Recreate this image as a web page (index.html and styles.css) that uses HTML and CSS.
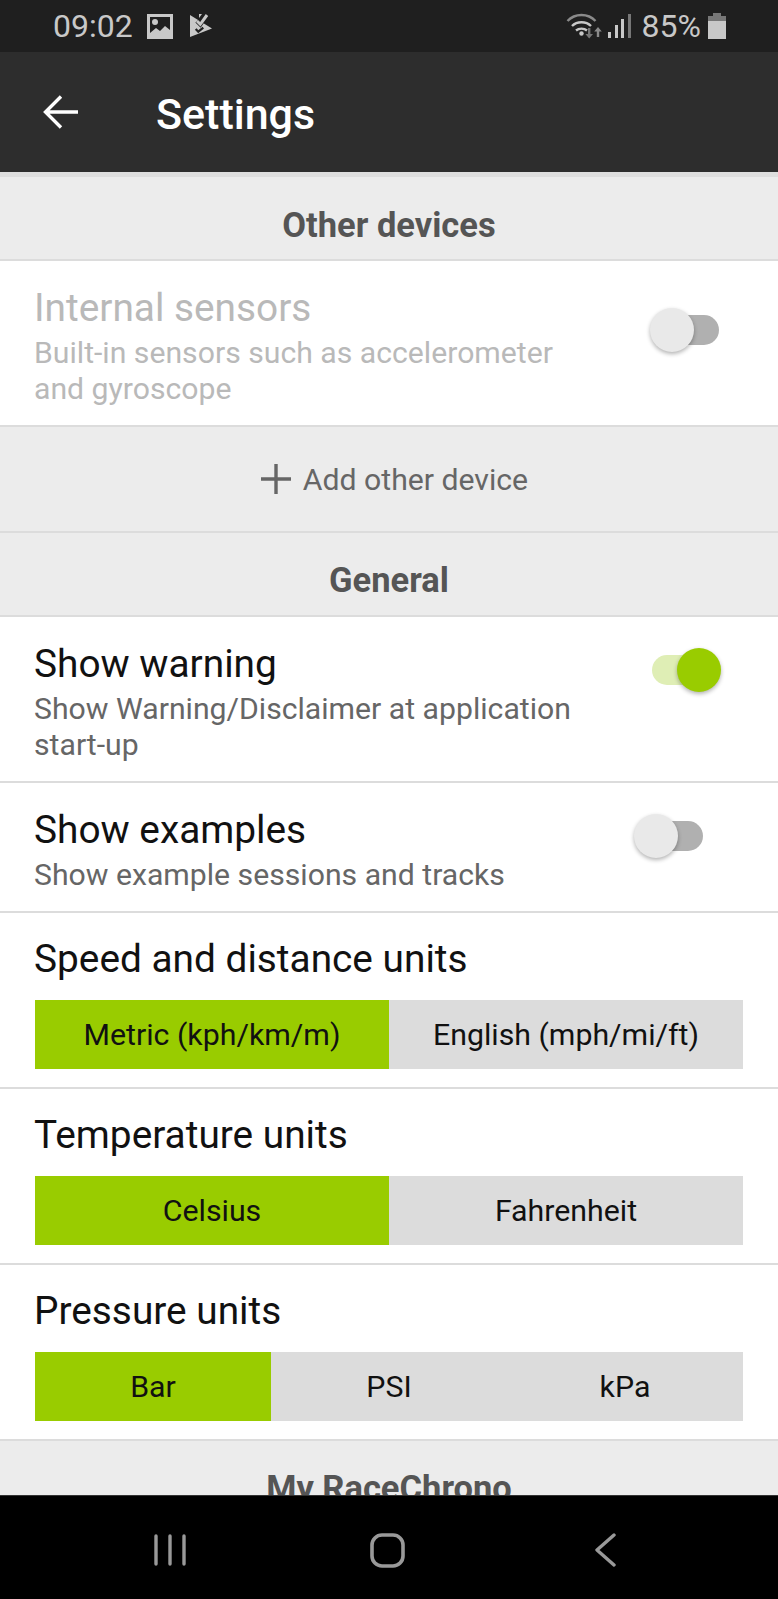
FILE: index.html
```html
<!DOCTYPE html>
<html lang="en">
<head>
    <meta charset="UTF-8">
    <meta name="viewport" content="width=device-width, initial-scale=1.0">
    <title>Settings</title>
    <link rel="stylesheet" href="styles.css">
</head>
<body>
    <div class="phone">
        <div class="status-bar">
            <span class="clock">09:02</span>
            <svg class="status-icon" width="26" height="25" viewBox="0 0 26 25">
                <rect width="26" height="25" fill="#c8c8c8"/>
                <path fill="#1f1f1f" d="M3 3h20v13l-5-4-5 5-4-3-6 5z"/>
                <circle cx="8" cy="8" r="3" fill="#c8c8c8"/>
            </svg>
            <svg class="status-icon" width="23" height="24" viewBox="0 0 23 24">
                <path fill="#c8c8c8" d="M0 1l22 13.500L0 23z"/>
                <path fill="none" stroke="#1f1f1f" stroke-width="4.500" d="M7 7l3.300 3.300L17 0.500"/>
                <path fill="#c8c8c8" d="M9 0h3l-3 4z"/>
                <path fill="none" stroke="#c8c8c8" stroke-width="3" d="M7 7l3.300 3.300L17 1"/>
                <path fill="none" stroke="#1f1f1f" stroke-width="2.200" d="M5.700 15l2.600 2.700 5-4"/>
            </svg>
            <span class="spacer"></span>
            <svg class="wifi" width="36" height="26" viewBox="0 0 36 26">
                <path fill="none" stroke="#8a8a8a" stroke-width="2.400" d="M1.500 8C9 0 22 0 29.500 8"/>
                <path fill="none" stroke="#c8c8c8" stroke-width="2.400" d="M6 13c5-5 14-5 19 0M10 17.500c3-2.500 8-2.500 11 0"/>
                <circle cx="15.500" cy="20.500" r="2.200" fill="#c8c8c8"/>
                <path fill="#777" d="M22 15h2.400v6H27l-3.800 4.500L19.400 21H22z"/>
                <path fill="#8a8a8a" d="M32 14l3.800 4.500h-2.600v5.500h-2.400v-5.500h-2.600z"/>
            </svg>
            <svg class="signal" width="23" height="24" viewBox="0 0 23 24">
                <rect x="0" y="18" width="3" height="6" fill="#c8c8c8"/>
                <rect x="7" y="11" width="3" height="13" fill="#c8c8c8"/>
                <rect x="13" y="5" width="3" height="19" fill="#c8c8c8"/>
                <rect x="20" y="0" width="3" height="24" fill="#777"/>
            </svg>
            <span class="battery-text">85%</span>
            <svg class="battery" width="18" height="26" viewBox="0 0 18 26">
                <path fill="#777" d="M5 0h8v3h5v6H0V3h5z"/>
                <rect x="0" y="8" width="18" height="18" fill="#c8c8c8"/>
            </svg>
        </div>

        <div class="toolbar">
            <svg class="back-arrow" width="36" height="34" viewBox="0 0 36 34">
                <path fill="none" stroke="#fff" stroke-width="3.400" d="M35 17H3M18 1.500L2.500 17L18 32.500"/>
            </svg>
            <h1>Settings</h1>
        </div>

        <div class="content">
            <div class="section-head first">Other devices</div>
            <div class="row row-disabled">
                <div class="row-text">
                    <div class="row-title">Internal sensors</div>
                    <div class="row-sub">Built-in sensors such as accelerometer and gyroscope</div>
                </div>
                <div class="switch switch-internal"><span class="track"></span><span class="thumb"></span></div>
            </div>
            <div class="add-row">
                <svg width="32" height="32" viewBox="0 0 32 32">
                    <path fill="none" stroke="#666" stroke-width="3.400" d="M16 1v30M1 16h30"/>
                </svg>
                <span>Add other device</span>
            </div>

            <div class="section-head">General</div>
            <div class="row">
                <div class="row-text">
                    <div class="row-title">Show warning</div>
                    <div class="row-sub">Show Warning/Disclaimer at application start-up</div>
                </div>
                <div class="switch switch-on"><span class="track"></span><span class="thumb"></span></div>
            </div>
            <div class="row row-short">
                <div class="row-text">
                    <div class="row-title">Show examples</div>
                    <div class="row-sub">Show example sessions and tracks</div>
                </div>
                <div class="switch switch-examples"><span class="track"></span><span class="thumb"></span></div>
            </div>

            <div class="choice-row">
                <div class="row-title">Speed and distance units</div>
                <div class="segments">
                    <div class="segment active">Metric (kph/km/m)</div>
                    <div class="segment">English (mph/mi/ft)</div>
                </div>
            </div>
            <div class="choice-row">
                <div class="row-title">Temperature units</div>
                <div class="segments">
                    <div class="segment active">Celsius</div>
                    <div class="segment">Fahrenheit</div>
                </div>
            </div>
            <div class="choice-row">
                <div class="row-title">Pressure units</div>
                <div class="segments">
                    <div class="segment active">Bar</div>
                    <div class="segment">PSI</div>
                    <div class="segment">kPa</div>
                </div>
            </div>

            <div class="section-head">My RaceChrono</div>
        </div>

        <div class="nav-bar">
            <svg width="32" height="32" viewBox="0 0 32 32">
                <path fill="none" stroke="#999" stroke-width="3.400" stroke-linecap="round" d="M2 2v28M16 2v28M30 2v28"/>
            </svg>
            <svg class="nav-home" width="35" height="35" viewBox="0 0 35 35">
                <rect x="2" y="2" width="31" height="31" rx="10" fill="none" stroke="#999" stroke-width="3.600"/>
            </svg>
            <svg width="24" height="34" viewBox="0 0 24 34">
                <path fill="none" stroke="#999" stroke-width="3.400" stroke-linecap="round" stroke-linejoin="round" d="M21 2L4 17l17 15"/>
            </svg>
        </div>
    </div>
</body>
</html>
```

FILE: styles.css
```css
* {
    margin: 0;
    padding: 0;
    box-sizing: border-box;
}

body {
    font-family: 'Roboto', 'Liberation Sans', sans-serif;
    background: #000;
}

.phone {
    width: 778px;
    height: 1599px;
    display: flex;
    flex-direction: column;
    overflow: hidden;
}

.status-bar {
    height: 52px;
    flex-shrink: 0;
    background: #1f1f1f;
    color: #c8c8c8;
    display: flex;
    align-items: center;
    padding: 0 52px 0 53px;
    font-size: 32px;
}

.clock {
    margin-right: 14px;
}

.status-icon {
    margin-right: 17px;
}

.spacer {
    flex: 1;
}

.signal {
    margin: 0 11px 0 6px;
}

.battery {
    margin-left: 7px;
}

.toolbar {
    height: 120px;
    flex-shrink: 0;
    background: #2d2d2d;
    display: flex;
    align-items: center;
    padding-left: 43px;
}

.toolbar h1 {
    font-size: 43px;
    font-weight: 500;
    color: #fff;
    margin: 3px 0 0 77px;
}

.content {
    flex: 1;
    min-height: 0;
    overflow: hidden;
    background: #fff;
}

.section-head {
    height: 84px;
    padding-top: 12px;
    background: #ececec;
    border-bottom: 2px solid #dcdcdc;
    color: #555;
    font-size: 34.500px;
    font-weight: 700;
    display: flex;
    align-items: center;
    justify-content: center;
}

.section-head.first {
    height: 89px;
    padding-top: 13px;
    border-top: 5px solid #dedede;
}

.row {
    height: 166px;
    display: flex;
    align-items: flex-start;
    justify-content: space-between;
    padding: 22px 0 0 34px;
    border-bottom: 2px solid #dcdcdc;
    position: relative;
}

.row-short {
    height: 130px;
}

.row-text {
    width: 550px;
}

.row-title {
    font-size: 38.800px;
    line-height: 50px;
    color: #111;
}

.row-sub {
    font-size: 30.200px;
    line-height: 36px;
    color: #666;
    margin-top: 2px;
}

.row-disabled .row-title,
.row-disabled .row-sub {
    color: #b9b9b9;
}

.add-row {
    height: 106px;
    padding-left: 10px;
    background: #ececec;
    border-bottom: 2px solid #dcdcdc;
    color: #666;
    font-size: 30.200px;
    display: flex;
    align-items: center;
    justify-content: center;
    gap: 11px;
}

/* the thumb hangs over the track */
.switch {
    position: absolute;
    width: 69px;
    height: 44px;
}

.switch .track {
    position: absolute;
    left: 2px;
    right: 0;
    top: 7px;
    height: 30px;
    border-radius: 15px;
    background: #b0b0b0;
}

.switch .thumb {
    position: absolute;
    left: 0;
    top: 0;
    width: 44px;
    height: 44px;
    border-radius: 50%;
    background: #e9e9e9;
    box-shadow: 0 2px 4px rgba(0,0,0,0.3);
}

.switch-internal {
    left: 650px;
    top: 47px;
}

.switch-examples {
    left: 634px;
    top: 31px;
}

.switch-on {
    left: 651px;
    top: 31px;
}

.switch-on .track {
    background: #dfeeb5;
    right: 2px;
    left: 1px;
}

.switch-on .thumb {
    left: 26px;
    background: #99cc00;
}

.choice-row {
    height: 176px;
    padding: 21px 35px 0 34px;
    border-bottom: 2px solid #dcdcdc;
}

.segments {
    display: flex;
    height: 69px;
    margin: 16px 0 0 1px;
    background: #dcdcdc;
}

.segment {
    flex: 1;
    display: flex;
    align-items: center;
    justify-content: center;
    font-size: 30.300px;
    color: #111;
}

.segment.active {
    background: #99cc00;
}

.nav-bar {
    height: 104px;
    flex-shrink: 0;
    background: #000;
    border-top: 1px solid #333;
    display: flex;
    align-items: center;
    padding: 5px 161px 0 154px;
    justify-content: space-between;
}

.nav-home {
    margin-right: 5px;
}
```
